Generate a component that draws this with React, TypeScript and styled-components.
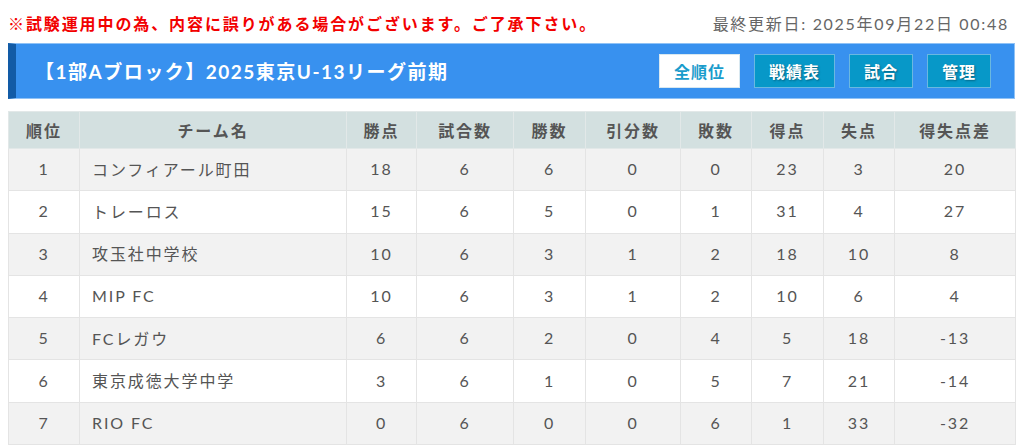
import styled, { createGlobalStyle } from "styled-components"

const GlobalStyle = createGlobalStyle`
  html, body {
    margin: 0;
    padding: 0;
    background: #fff;
  }
  body {
    font-family: Lato, "Noto Sans CJK JP", sans-serif;
    color: #555;
  }
`

type Team = {
  rank: number
  name: string
  points: number
  played: number
  won: number
  drawn: number
  lost: number
  goalsFor: number
  goalsAgainst: number
}

const teams: Team[] = [
  { rank: 1, name: "コンフィアール町田", points: 18, played: 6, won: 6, drawn: 0, lost: 0, goalsFor: 23, goalsAgainst: 3 },
  { rank: 2, name: "トレーロス", points: 15, played: 6, won: 5, drawn: 0, lost: 1, goalsFor: 31, goalsAgainst: 4 },
  { rank: 3, name: "攻玉社中学校", points: 10, played: 6, won: 3, drawn: 1, lost: 2, goalsFor: 18, goalsAgainst: 10 },
  { rank: 4, name: "MIP FC", points: 10, played: 6, won: 3, drawn: 1, lost: 2, goalsFor: 10, goalsAgainst: 6 },
  { rank: 5, name: "FCレガウ", points: 6, played: 6, won: 2, drawn: 0, lost: 4, goalsFor: 5, goalsAgainst: 18 },
  { rank: 6, name: "東京成徳大学中学", points: 3, played: 6, won: 1, drawn: 0, lost: 5, goalsFor: 7, goalsAgainst: 21 },
  { rank: 7, name: "RIO FC", points: 0, played: 6, won: 0, drawn: 0, lost: 6, goalsFor: 1, goalsAgainst: 33 },
]

const columns = [
  { label: "順位", width: 71 },
  { label: "チーム名", width: 267 },
  { label: "勝点", width: 70 },
  { label: "試合数", width: 97 },
  { label: "勝数", width: 72 },
  { label: "引分数", width: 95 },
  { label: "敗数", width: 71 },
  { label: "得点", width: 72 },
  { label: "失点", width: 71 },
  { label: "得失点差", width: 121 },
]

const navItems = ["全順位", "戦績表", "試合", "管理"]

const App = () => {
  return (
    <>
      <GlobalStyle />
      <Page>
        <TopLine>
          <Notice>※試験運用中の為、内容に誤りがある場合がございます。ご了承下さい。</Notice>
          <Updated>最終更新日: 2025年09月22日 00:48</Updated>
        </TopLine>

        <TitleBar>
          <Title>【1部Aブロック】2025東京U-13リーグ前期</Title>
          <Nav>
            {navItems.map((item, i) => (
              <NavButton key={item} $active={i === 0}>
                {item}
              </NavButton>
            ))}
          </Nav>
        </TitleBar>

        <Table>
          <colgroup>
            {columns.map((c) => (
              <col key={c.label} style={{ width: c.width }} />
            ))}
          </colgroup>
          <thead>
            <tr>
              {columns.map((c) => (
                <Th key={c.label}>{c.label}</Th>
              ))}
            </tr>
          </thead>
          <tbody>
            {teams.map((t) => (
              <Row key={t.rank}>
                <Td>{t.rank}</Td>
                <Td $left>{t.name}</Td>
                <Td>{t.points}</Td>
                <Td>{t.played}</Td>
                <Td>{t.won}</Td>
                <Td>{t.drawn}</Td>
                <Td>{t.lost}</Td>
                <Td>{t.goalsFor}</Td>
                <Td>{t.goalsAgainst}</Td>
                <Td>{t.goalsFor - t.goalsAgainst}</Td>
              </Row>
            ))}
          </tbody>
        </Table>
      </Page>
    </>
  )
}

const Page = styled.div`
  padding: 0 9px 0 8px;
`

const TopLine = styled.div`
  display: flex;
  justify-content: space-between;
  align-items: center;
  height: 43px;
  padding-top: 3px;
  box-sizing: border-box;
`

const Notice = styled.div`
  color: #f20000;
  font-weight: bold;
  font-size: 16px;
  letter-spacing: 1.9px;
`

const Updated = styled.div`
  color: #666;
  font-size: 16px;
  letter-spacing: 1.7px;
  margin-right: 6px;
`

const TitleBar = styled.div`
  display: flex;
  align-items: center;
  justify-content: space-between;
  height: 56px;
  box-sizing: border-box;
  background: #3891ef;
  border: 1px solid #8fc2f6;
  border-left: 8px solid #125ba6;
  padding: 0 23px 0 19px;
`

const Title = styled.h1`
  margin: 0 0 2px;
  color: #fff;
  font-size: 19px;
  font-weight: bold;
  letter-spacing: 1.5px;
`

const Nav = styled.div`
  display: flex;
  gap: 14px;
`

const NavButton = styled.div<{ $active?: boolean }>`
  display: flex;
  align-items: center;
  justify-content: center;
  height: 34px;
  min-width: 64px;
  padding: 0 12px;
  box-sizing: border-box;
  font-size: 16px;
  font-weight: bold;
  letter-spacing: 1px;
  background: ${(p) => (p.$active ? "#fff" : "#0798c8")};
  color: ${(p) => (p.$active ? "#1a9ccc" : "#fff")};
  border: 1px solid ${(p) => (p.$active ? "#d8e8f0" : "#6ab8e0")};
  text-shadow: ${(p) => (p.$active ? "none" : "1px 1px 2px rgba(0,0,0,0.35)")};
  &:nth-child(1),
  &:nth-child(2) {
    width: 81px;
  }
`

const Table = styled.table`
  width: 1007px;
  margin-top: 12px;
  border-collapse: collapse;
  table-layout: fixed;
  font-size: 16px;
  letter-spacing: 1.9px;
`

const Th = styled.th`
  height: 35px;
  background: #d3e0e0;
  color: #555;
  font-weight: bold;
  text-align: center;
  border: 1px solid #e2e8e8;
  padding: 0 0 1px;
`

const Row = styled.tr`
  &:nth-child(odd) {
    background: #f2f2f2;
  }
  &:nth-child(even) {
    background: #fff;
  }
`

const Td = styled.td<{ $left?: boolean }>`
  height: 42.3px;
  box-sizing: border-box;
  padding: 0 ${(p) => (p.$left ? "12px" : "0")} 2px;
  text-align: ${(p) => (p.$left ? "left" : "center")};
  border: 1px solid #e4e4e4;
  color: #555;
`

export default App
